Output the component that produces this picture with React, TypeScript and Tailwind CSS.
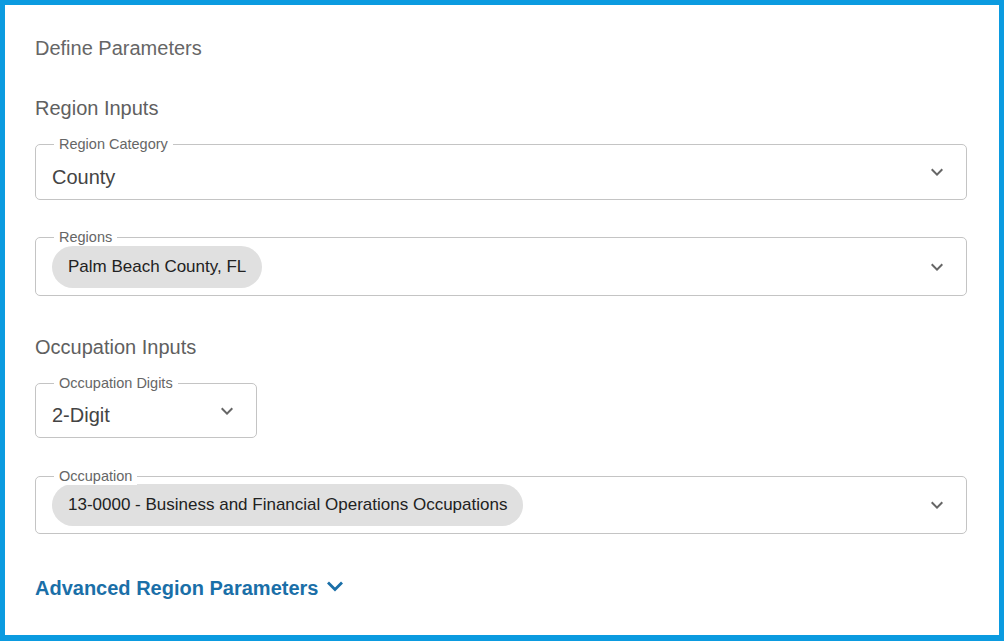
import React from "react";

const font = { fontFamily: '"Liberation Sans", Arial, sans-serif' };

function Chevron() {
  return (
    <svg width="24" height="24" viewBox="0 0 24 24" className="shrink-0 fill-[#666666]">
      <path d="M7.41 8.59 12 13.17l4.59-4.58L18 10l-6 6-6-6 1.41-1.41z" />
    </svg>
  );
}

function Chip({ children }: { children: React.ReactNode }) {
  return (
    <span className="inline-flex items-center h-[42px] px-[16px] rounded-full bg-[#e0e0e0] text-[17px] text-[#222222]">
      {children}
    </span>
  );
}

function Field({
  label,
  height,
  width,
  children,
}: {
  label: string;
  height: string;
  width?: string;
  children: React.ReactNode;
}) {
  return (
    <div
      className={`relative flex items-center justify-between rounded-[5px] border border-[#c4c4c4] pl-[16px] pr-[17px] ${height} ${width ?? "w-full"}`}
    >
      <span className="absolute -top-[9px] left-[18px] bg-white px-[5px] text-[14.5px] leading-[17px] text-[#666666]">
        {label}
      </span>
      <div className="flex items-center">{children}</div>
      <Chevron />
    </div>
  );
}

export default function App() {
  return (
    <div
      style={font}
      className="w-[1004px] h-[641px] bg-white border-[5px] border-b-[6px] border-[#0b9be0] pl-[30px] pr-[32px] pt-[31px] flex flex-col"
    >
      <h2 className="text-[20px] leading-[24px] text-[#666666]">Define Parameters</h2>

      <h3 className="mt-[36px] text-[20px] leading-[24px] text-[#606060]">Region Inputs</h3>

      <div className="mt-[24px]">
        <Field label="Region Category" height="h-[56px]">
          <span className="pt-[9px] text-[20px] text-[#444444]">County</span>
        </Field>
      </div>

      <div className="mt-[37px]">
        <Field label="Regions" height="h-[59px]">
          <Chip>Palm Beach County, FL</Chip>
        </Field>
      </div>

      <h3 className="mt-[39px] text-[20px] leading-[24px] text-[#606060]">Occupation Inputs</h3>

      <div className="mt-[24px]">
        <Field label="Occupation Digits" height="h-[55px]" width="w-[222px]">
          <span className="pt-[8px] text-[20px] text-[#444444]">2-Digit</span>
        </Field>
      </div>

      <div className="mt-[38px]">
        <Field label="Occupation" height="h-[58px]">
          <Chip>13-0000 - Business and Financial Operations Occupations</Chip>
        </Field>
      </div>

      <button className="mt-[42px] flex items-center gap-[8px] self-start text-[20px] leading-[24px] font-bold text-[#1a6fa8]">
        Advanced Region Parameters
        <svg width="18" height="12" viewBox="0 0 18 12" className="mt-[-4px]">
          <polyline points="2,2.5 9,9.5 16,2.5" fill="none" stroke="#1a6fa8" strokeWidth="2.8" />
        </svg>
      </button>
    </div>
  );
}
